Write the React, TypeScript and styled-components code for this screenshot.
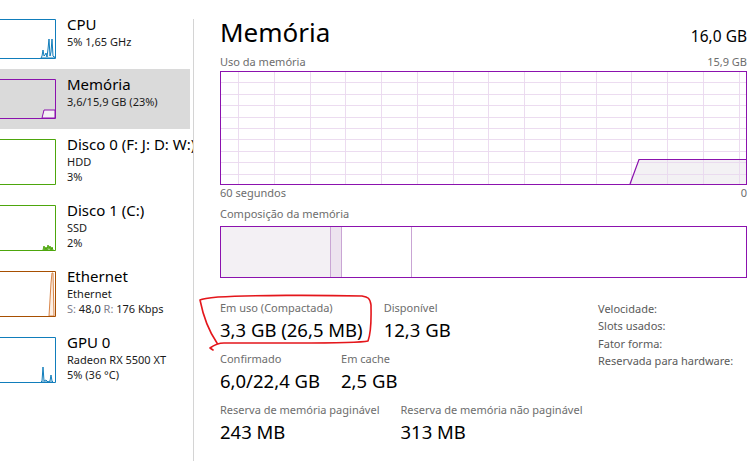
import React from 'react';
import styled, {createGlobalStyle} from 'styled-components';

const GlobalStyle = createGlobalStyle`
  html, body {
    margin: 0;
    padding: 0;
    background: #fff;
  }
  body {
    font-family: "Noto Sans", "Open Sans", sans-serif;
    color: #000;
  }
`;

const Dim = styled.span`
  color: #7d7d8c;
`;

interface Device {
  title: string;
  lines: React.ReactNode[];
  h: number;
  border: string;
  line: string;
  fill: string;
  graph?: string;
  selected?: boolean;
}

const devices: Device[] = [
  {
    title: 'CPU',
    lines: ['5% 1,65 GHz'],
    h: 40,
    border: '#117dbb',
    line: '#117dbb',
    fill: '#f1f6fa',
    graph: '41,39 42,37 43,31 44,37 45,36 46,34 47,38 48,30 49,20 50,37 51,33 52,20 53,37 54,38 55,38 55,39',
  },
  {
    title: 'Memória',
    lines: ['3,6/15,9 GB (23%)'],
    h: 40,
    border: '#8b12ae',
    line: '#8b12ae',
    fill: '#f4f2f4',
    graph: '42,39 44,31 55,31 55,39',
    selected: true,
  },
  {
    title: 'Disco 0 (F: J: D: W:)',
    lines: ['HDD', '3%'],
    h: 46,
    border: '#4da60c',
    line: '#4da60c',
    fill: '#eff7e7',
  },
  {
    title: 'Disco 1 (C:)',
    lines: ['SSD', '2%'],
    h: 46,
    border: '#4da60c',
    line: '#4da60c',
    fill: '#eff7e7',
    graph: '43,45 44,41 45,45 46,42 47,45 48,40 49,44 50,41 51,45 52,42 53,45',
  },
  {
    title: 'Ethernet',
    lines: [
      'Ethernet',
      <>
        <Dim>S:</Dim> 48,0 <Dim>R:</Dim> 176 Kbps
      </>,
    ],
    h: 46,
    border: '#a74f01',
    line: '#d9864a',
    fill: '#fcefe4',
    graph: '49,45 51,12 52,2 53,2 54,45',
  },
  {
    title: 'GPU 0',
    lines: ['Radeon RX 5500 XT', '5%  (36 °C)'],
    h: 46,
    border: '#117dbb',
    line: '#117dbb',
    fill: '#f1f6fa',
    graph: '41,45 42,44 43,30 44,44 46,43 48,45 50,44 51,38 52,44 53,45',
  },
];

const Thumb = ({d}: {d: Device}) => (
  <ThumbSvg width={56} height={d.h} viewBox={`0 0 56 ${d.h}`}>
    {d.graph && (
      <polygon points={d.graph} fill={d.fill} stroke={d.line} strokeWidth={1} />
    )}
    <path d={`M0 0.5 H55.5 V${d.h - 0.5} H0`} fill="none" stroke={d.border} strokeWidth={1} />
  </ThumbSvg>
);

// grelha do gráfico de uso
const chartW = 527;
const chartH = 114;
const gridX = Array.from({length: 15}, (_, i) => 18 + i * 35.75);
const gridY = Array.from({length: 9}, (_, i) => (i + 1) * (chartH / 10));

const UsageChart = () => (
  <ChartSvg width={chartW} height={chartH} viewBox={`0 0 ${chartW} ${chartH}`}>
    <polygon points={`410,113 419,88.5 526,88.5 526,113`} fill="#f3f1f4" />
    {gridX.map((x) => (
      <line key={'x' + x} x1={Math.round(x) + 0.5} y1={1} x2={Math.round(x) + 0.5} y2={chartH - 1} stroke="#ead9ef" strokeWidth={1} opacity={0.9} />
    ))}
    {gridY.map((y) => (
      <line key={'y' + y} x1={1} y1={Math.round(y) + 0.5} x2={chartW - 1} y2={Math.round(y) + 0.5} stroke="#ead9ef" strokeWidth={1} opacity={0.9} />
    ))}
    <polyline points="410,113 419,88.5 526,88.5" fill="none" stroke="#8b12ae" strokeWidth={1.2} />
    <rect x={0.5} y={0.5} width={chartW - 1} height={chartH - 1} fill="none" stroke="#8b12ae" strokeWidth={1} />
  </ChartSvg>
);

const CompositionBar = () => (
  <ChartSvg width={chartW} height={52} viewBox={`0 0 ${chartW} 52`}>
    <rect x={1} y={1} width={109.5} height={50} fill="#f3f0f4" />
    <rect x={110.5} y={1} width={11} height={50} fill="#ede3ef" />
    <line x1={110.5} y1={1} x2={110.5} y2={51} stroke="#c9a5d4" />
    <line x1={121.5} y1={1} x2={121.5} y2={51} stroke="#c9a5d4" />
    <line x1={191.5} y1={1} x2={191.5} y2={51} stroke="#c9a5d4" />
    <rect x={0.5} y={0.5} width={chartW - 1} height={51} fill="none" stroke="#8b12ae" strokeWidth={1} />
  </ChartSvg>
);

const statRows = [
  [
    {label: 'Em uso (Compactada)', value: '3,3 GB (26,5 MB)'},
    {label: 'Disponível', value: '12,3 GB'},
  ],
  [
    {label: 'Confirmado', value: '6,0/22,4 GB'},
    {label: 'Em cache', value: '2,5 GB'},
  ],
  [
    {label: 'Reserva de memória paginável', value: '243 MB'},
    {label: 'Reserva de memória não paginável', value: '313 MB'},
  ],
];

const hardware = ['Velocidade:', 'Slots usados:', 'Fator forma:', 'Reservada para hardware:'];

const App = () => {
  return (
    <Page>
      <GlobalStyle />
      <Sidebar>
        {devices.map((d) => (
          <Item key={d.title} $selected={d.selected}>
            <Thumb d={d} />
            <ItemText>
              <ItemTitle>{d.title}</ItemTitle>
              {d.lines.map((l, i) => (
                <ItemSub key={i}>{l}</ItemSub>
              ))}
            </ItemText>
          </Item>
        ))}
      </Sidebar>
      <Divider />
      <Main>
        <Header>
          <Title>Memória</Title>
          <Total>16,0 GB</Total>
        </Header>
        <Caption>
          <span>Uso da memória</span>
          <span>15,9 GB</span>
        </Caption>
        <UsageChart />
        <Caption $top={1}>
          <span>60 segundos</span>
          <span>0</span>
        </Caption>
        <Caption $top={5}>
          <span>Composição da memória</span>
        </Caption>
        <BarWrap>
          <CompositionBar />
        </BarWrap>
        <StatsArea>
          <LeftStats>
            {statRows.map((row, i) => (
              <StatRow key={i}>
                {row.map((s) => (
                  <Stat key={s.label}>
                    <StatLabel>{s.label}</StatLabel>
                    <StatValue>{s.value}</StatValue>
                  </Stat>
                ))}
              </StatRow>
            ))}
          </LeftStats>
          <RightStats>
            {hardware.map((h) => (
              <HwLine key={h}>{h}</HwLine>
            ))}
          </RightStats>
        </StatsArea>
      </Main>
      <Annotation width={750} height={467} viewBox="0 0 750 467">
        <path
          d="M213 350 L210 348 C214 345 218 343 224 343 L296 343 C330 343 360 343 368 341 C372 330 371 315 371 305 C370 298 368 297 362 296 C320 295 250 295 218 297 C208 298 202 299 200 300 C203 315 208 330 217 343"
          fill="none"
          stroke="#e4161b"
          strokeWidth={1.6}
          strokeLinecap="round"
          strokeLinejoin="round"
        />
      </Annotation>
    </Page>
  );
};

const Page = styled.div`
  position: relative;
  width: 750px;
  height: 467px;
  display: flex;
  overflow: hidden;
  background: #fff;
`;

const Sidebar = styled.div`
  width: 193px;
  flex-shrink: 0;
  padding-top: 9px;
  overflow: hidden;
`;

const Item = styled.div<{$selected?: boolean}>`
  display: flex;
  align-items: flex-start;
  padding: 10px 0;
  margin-right: 3px;
  background: ${(p) => (p.$selected ? '#dadada' : 'transparent')};
`;

const ThumbSvg = styled.svg`
  display: block;
  flex-shrink: 0;
`;

const ItemText = styled.div`
  margin: -4px 0 0 11px;
  white-space: nowrap;
`;

const ItemTitle = styled.div`
  font-size: 15px;
  line-height: 19px;
  color: #000;
`;

const ItemSub = styled.div`
  font-size: 11px;
  line-height: 15px;
  color: #1a1a1a;
`;

const Divider = styled.div`
  width: 1px;
  flex-shrink: 0;
  margin: 19px 0 6px;
  background: #d4d4d4;
`;

const Main = styled.div`
  flex: 1;
  min-width: 0;
  padding: 15px 3px 0 26px;
  display: flex;
  flex-direction: column;
`;

const Header = styled.div`
  display: flex;
  align-items: baseline;
  justify-content: space-between;
`;

const Title = styled.div`
  font-size: 26px;
  line-height: 34px;
`;

const Total = styled.div`
  font-size: 15.5px;
  line-height: 20px;
`;

const Caption = styled.div<{$top?: number}>`
  display: flex;
  justify-content: space-between;
  margin-top: ${(p) => p.$top ?? 6}px;
  margin-bottom: 2px;
  font-size: 11px;
  line-height: 14px;
  color: #6d6d6d;
`;

const ChartSvg = styled.svg`
  display: block;
`;

const BarWrap = styled.div`
  margin-top: 3px;
`;

const StatsArea = styled.div`
  display: flex;
  margin-top: 21px;
`;

const LeftStats = styled.div`
  flex: 1;
  display: flex;
  flex-direction: column;
  gap: 6px;
`;

const StatRow = styled.div`
  display: flex;
  gap: 21px;
`;

const Stat = styled.div`
  display: flex;
  flex-direction: column;
  white-space: nowrap;
`;

const StatLabel = styled.div`
  font-size: 11px;
  line-height: 17px;
  color: #6d6d6d;
`;

const StatValue = styled.div`
  font-size: 18.5px;
  line-height: 28px;
  color: #000;
`;

const RightStats = styled.div`
  width: 149px;
  padding-top: 1px;
`;

const HwLine = styled.div`
  font-size: 11px;
  line-height: 17.3px;
  color: #5a5a5a;
  white-space: nowrap;
`;

const Annotation = styled.svg`
  position: absolute;
  left: 0;
  top: 0;
  pointer-events: none;
`;

export default App;
